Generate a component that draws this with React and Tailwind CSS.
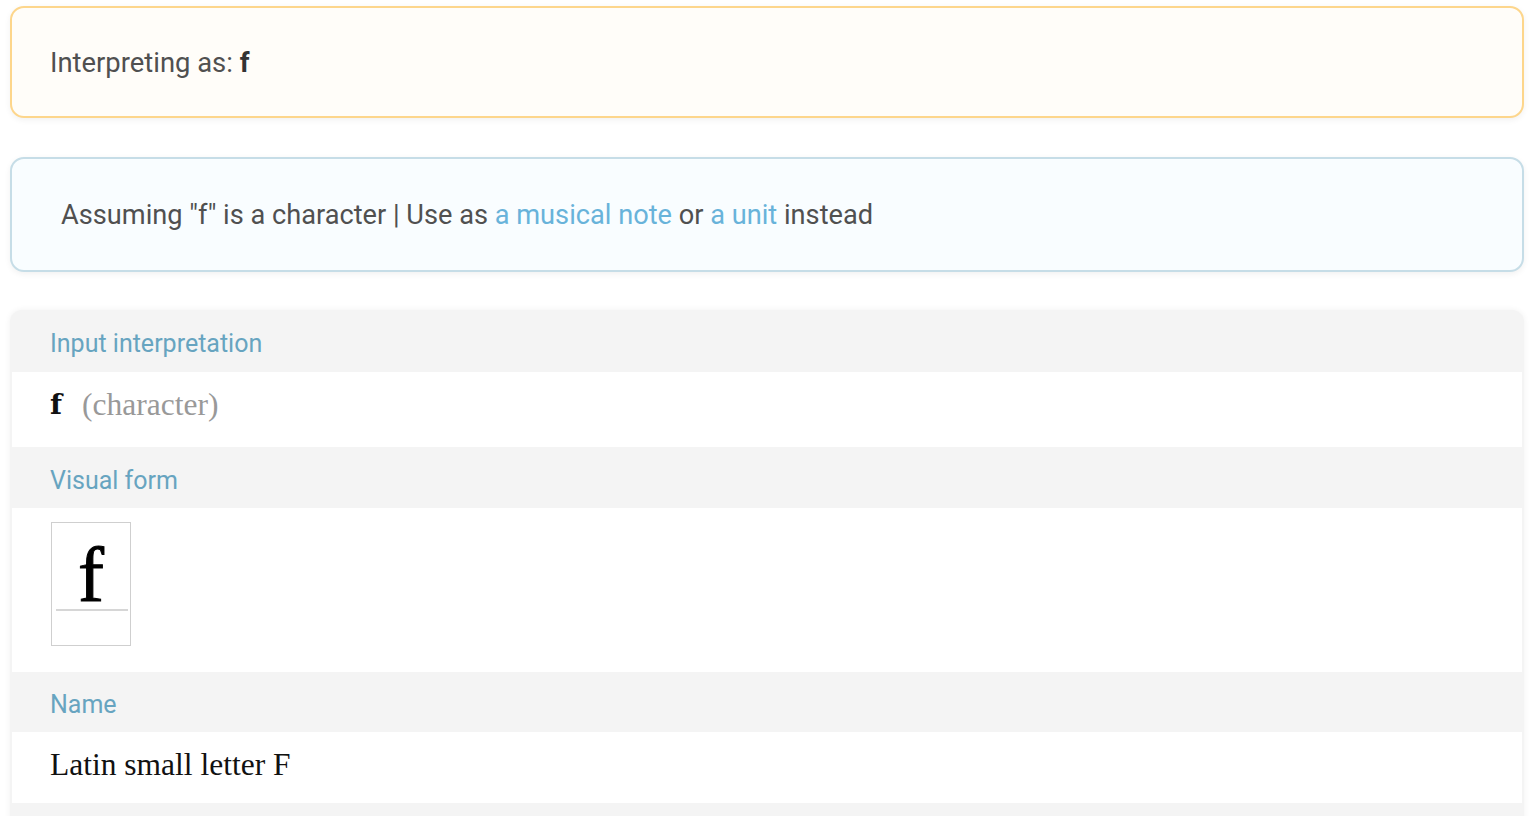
export default function App() {
  const sans = { fontFamily: "Roboto, 'Liberation Sans', sans-serif" };
  const serif = { fontFamily: "'Liberation Serif', 'DejaVu Serif', serif" };
  return (
    <div className="min-h-[816px] w-[1534px] bg-white px-[10px] pt-[6px]" style={sans}>
      <div className="flex h-[112px] items-center rounded-[14px] border-2 border-[#fdd68c] bg-[#fffdf9] pl-[38px] text-[27.4px] text-[#505050] shadow-[0_2px_6px_rgba(0,0,0,0.06)]">
        <span className="pt-[3px]">
          Interpreting as: <span className="font-bold text-[#333]">f</span>
        </span>
      </div>

      <div className="mt-[39px] flex h-[115px] items-center rounded-[14px] border-2 border-[#c6dde7] bg-[#f9fdff] pl-[49px] text-[27.2px] text-[#505050] shadow-[0_2px_6px_rgba(0,0,0,0.06)]">
        <span className="pt-[2px]">
          Assuming "f" is a character | Use as{" "}
          <span className="text-[#68b3da]">a musical note</span> or{" "}
          <span className="text-[#68b3da]">a unit</span> instead
        </span>
      </div>

      <div className="mt-[38px] rounded-t-[12px] bg-[#f4f4f4] px-[2px] shadow-[0_0_6px_rgba(0,0,0,0.06)]">
        <div className="flex h-[62px] items-center pl-[38px] pt-[6px] text-[25px] text-[#67a4c0]">Input interpretation</div>
        <div className="flex h-[75px] items-center bg-white pb-[10px] pl-[38px]">
          <span className="text-[28px] font-bold text-[#111]" style={{ fontFamily: "'DejaVu Serif', serif" }}>f</span>
          <span className="ml-[20px] text-[31.5px] text-[#999]" style={serif}>(character)</span>
        </div>
        <div className="flex h-[61px] items-center pl-[38px] pt-[6px] text-[25px] text-[#67a4c0]">Visual form</div>
        <div className="h-[164px] bg-white pl-[39px] pt-[14px]">
          <div className="relative h-[124px] w-[80px] border border-[#cfcfcf] bg-white">
            <div className="absolute left-[4px] right-[2px] top-[86px] h-[2px] bg-[#d6d6d6]" />
            <div className="absolute left-0 right-0 top-[12px] text-center text-[78px] leading-[80px] text-black [-webkit-text-stroke:1px_black]" style={serif}>f</div>
          </div>
        </div>
        <div className="flex h-[60px] items-center pl-[38px] pt-[6px] text-[25px] text-[#67a4c0]">Name</div>
        <div className="flex h-[71px] items-center bg-white pl-[38px] pb-[6px] text-[31.5px] text-[#111]" style={serif}>
          Latin small letter F
        </div>
        <div className="h-[20px]" />
      </div>
    </div>
  );
}
